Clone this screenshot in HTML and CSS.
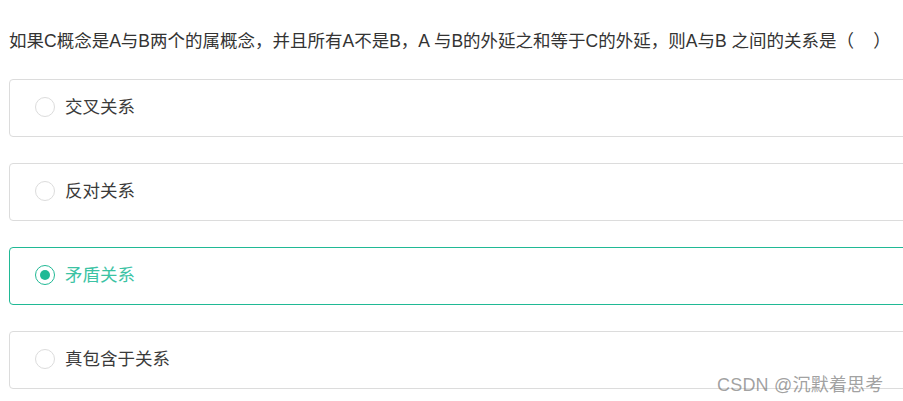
FILE: index.html
```html
<!DOCTYPE html>
<html lang="zh">
<head>
<meta charset="utf-8">
<link rel="stylesheet" href="styles.css">
</head>
<body>
<div class="page">
  <div class="question">如果C概念是A与B两个的属概念，并且所有A不是B，A 与B的外延之和等于C的外延，则A与B 之间的关系是（&nbsp;&nbsp;&nbsp;&nbsp;）</div>
  <div class="options">
    <div class="option"><span class="radio"></span><span class="label">交叉关系</span></div>
    <div class="option"><span class="radio"></span><span class="label">反对关系</span></div>
    <div class="option selected"><span class="radio"></span><span class="label">矛盾关系</span></div>
    <div class="option"><span class="radio"></span><span class="label">真包含于关系</span></div>
  </div>
  <div class="watermark">CSDN @沉默着思考</div>
</div>
</body>
</html>
```
FILE: styles.css
```css
html, body {
  margin: 0;
  padding: 0;
  background: #fff;
}
.page {
  position: relative;
  width: 903px;
  height: 401px;
  overflow: hidden;
  padding-left: 9px;
  box-sizing: border-box;
  font-family: "Liberation Sans", "Noto Sans CJK SC", sans-serif;
  color: #333;
}
.question {
  font-size: 17.5px;
  line-height: 22px;
  padding-top: 30px;
  white-space: nowrap;
}
.options {
  display: flex;
  flex-direction: column;
  gap: 26px;
  margin-top: 27px;
}
.option {
  width: 1000px;
  height: 58px;
  box-sizing: border-box;
  border: 1px solid #dcdcdc;
  border-radius: 4px;
  display: flex;
  align-items: center;
  padding-left: 25px;
}
.radio {
  width: 20px;
  height: 20px;
  box-sizing: border-box;
  border: 1px solid #dcdcdc;
  border-radius: 50%;
  margin-right: 10px;
  margin-top: -2px;
  display: flex;
  align-items: center;
  justify-content: center;
}
.label {
  font-size: 17.5px;
  line-height: 22px;
  margin-top: -3px;
  color: #3a3a3a;
}
.option.selected {
  border-color: #20b995;
}
.option.selected .radio {
  border: 1.5px solid #20b995;
}
.option.selected .radio::after {
  content: "";
  width: 10px;
  height: 10px;
  border-radius: 50%;
  background: #20b995;
}
.option.selected .label {
  color: #3cc3a4;
}
.watermark {
  position: absolute;
  left: 717px;
  top: 370px;
  font-size: 18px;
  letter-spacing: 0.2px;
  color: rgba(120, 120, 120, 0.7);
  white-space: nowrap;
}
```
